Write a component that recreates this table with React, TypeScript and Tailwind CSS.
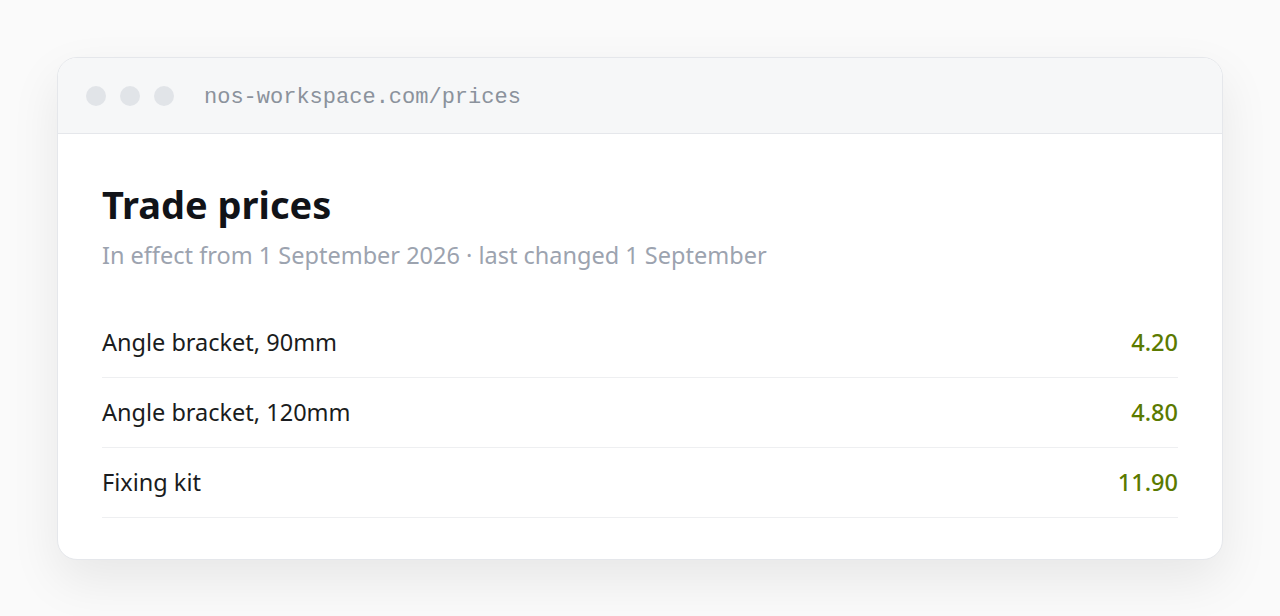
import React from 'react';

const rows = [
  { name: 'Angle bracket, 90mm', price: '4.20' },
  { name: 'Angle bracket, 120mm', price: '4.80' },
  { name: 'Fixing kit', price: '11.90' },
];

export default function App() {
  return (
    <div className="min-h-[616px] w-full bg-[#fafafa] px-[57px] pt-[57px] font-['Noto_Sans',sans-serif]">
      <div className="overflow-hidden rounded-[20px] border border-[#e5e7eb] bg-white shadow-[0_20px_50px_rgba(0,0,0,0.08)]">
        <div className="flex h-[76px] items-center border-b border-[#e5e7eb] bg-[#f6f7f8] px-[28px]">
          <div className="flex gap-[14px]">
            <span className="h-5 w-5 rounded-full bg-[#e1e4e8]" />
            <span className="h-5 w-5 rounded-full bg-[#e1e4e8]" />
            <span className="h-5 w-5 rounded-full bg-[#e1e4e8]" />
          </div>
          <span className="ml-[30px] mt-[3px] font-['Liberation_Mono',monospace] text-[22px] text-[#8b929c]">
            nos-workspace.com/prices
          </span>
        </div>
        <div className="px-[44px] pt-[47px] pb-[41px]">
          <h1 className="text-[38px] leading-[46px] font-bold text-[#111318]">Trade prices</h1>
          <p className="mt-[12px] text-[23.5px] leading-[32px] text-[#9ca3af]">
            In effect from 1 September 2026 · last changed 1 September
          </p>
          <div className="mt-[37px]">
            {rows.map((r) => (
              <div
                key={r.name}
                className="flex h-[70px] items-center justify-between border-b border-[#eeeff1] text-[23.5px]"
              >
                <span className="text-[#1a1c20]">{r.name}</span>
                <span className="font-medium text-[#5b7a00]">{r.price}</span>
              </div>
            ))}
          </div>
        </div>
      </div>
    </div>
  );
}
